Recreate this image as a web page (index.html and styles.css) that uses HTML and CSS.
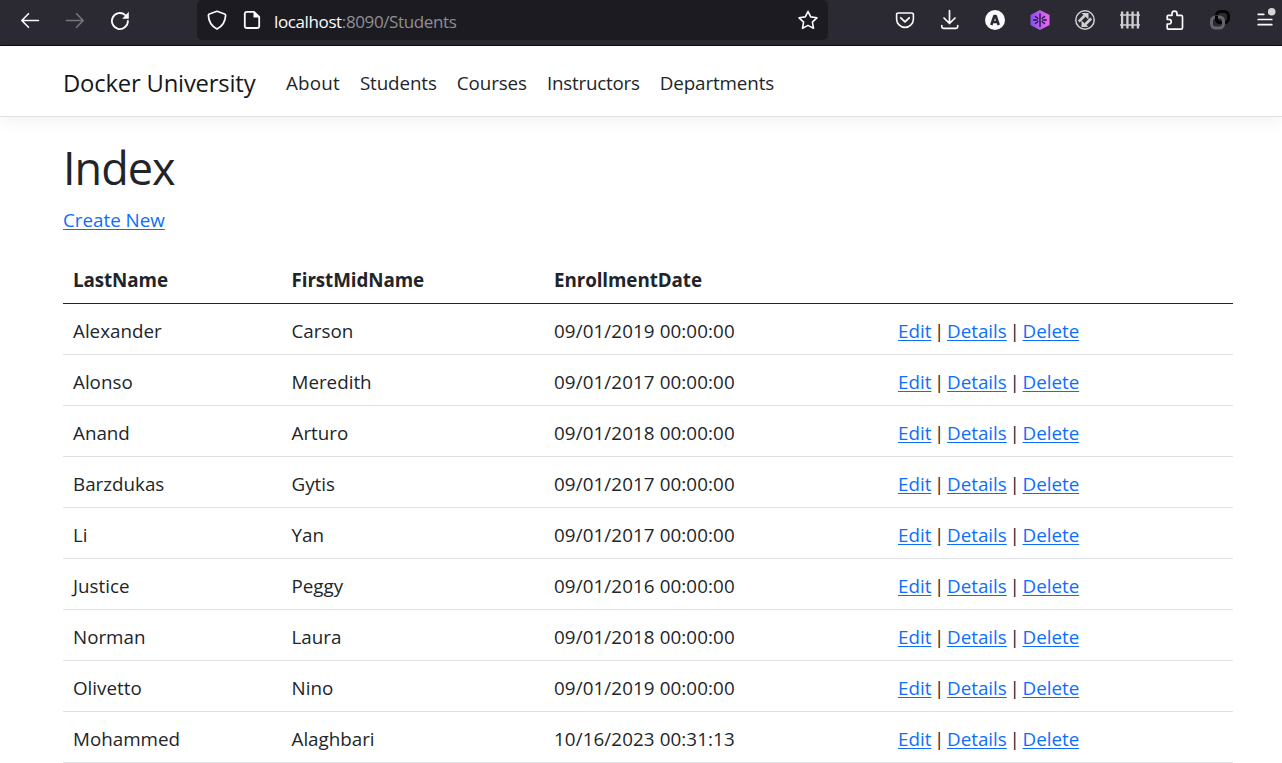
FILE: index.html
```html
<!DOCTYPE html>
<html lang="en">
<head>
<meta charset="utf-8">
<title>Index - Docker University</title>
<link rel="stylesheet" href="styles.css">
</head>
<body>
<div class="toolbar">
  <div class="history">
    <svg class="icon" viewBox="0 0 20 20"><path d="M18.5 10.5H2M8.5 3.7 1.8 10.5l6.7 6.8"/></svg>
    <svg class="icon dim" viewBox="0 0 20 20"><path d="M1.5 10.5H18M11.5 3.7l6.7 6.8-6.7 6.8"/></svg>
    <svg class="icon" viewBox="0 0 20 20"><path stroke-width="1.8" d="M17.9 11a8 8 0 1 1-2.6-5.9"/><path class="solid" d="M18.8 1.8v7h-6.6z"/></svg>
  </div>
  <div class="urlbar">
    <svg class="icon" viewBox="0 0 20 20"><path stroke-width="1.7" d="M10 1.3 17.6 4c.8.3 1 .8 1 1.4-.2 5.2-2.4 10.4-8.6 13.7C3.8 15.8 1.6 10.6 1.4 5.4c0-.6.2-1.1 1-1.4z"/></svg>
    <svg class="icon" viewBox="0 0 20 20"><path stroke-width="1.8" d="M12 1.8H4.8Q2.8 1.8 2.8 3.8V16Q2.8 18 4.8 18h10.4q2 0 2-2V7z"/><path class="solid" d="M11.5 1.5v6h6z"/></svg>
    <div class="address"><span class="host">localhost</span>:8090/Students</div>
    <svg class="icon" viewBox="0 0 20 20"><path stroke-width="1.6" d="m10 1.3 2.7 5.6 6.2.9-4.5 4.3 1.1 6.2L10 15.4l-5.5 2.9 1.1-6.2-4.5-4.3 6.2-.9z"/></svg>
  </div>
  <div class="extensions">
    <svg class="icon" viewBox="0 0 20 20"><path stroke-width="1.6" d="M3.3 3h13.4q1.7 0 1.7 1.7V9a8.4 8.4 0 0 1-16.8 0V4.7Q1.6 3 3.3 3z"/><path stroke-width="1.8" d="m5.8 7.8 4.2 4 4.2-4"/></svg>
    <svg class="icon" viewBox="0 0 20 20"><path stroke-width="1.7" d="M9.5.5v13M4 8l5.500 5.500L15 8M1.800 15.500v1.200q0 1.600 1.600 1.600h12.700q1.600 0 1.600-1.600v-1.200"/></svg>
    <svg class="icon" viewBox="0 0 20 20"><circle class="solid" cx="10" cy="10" r="10"/><path class="ink" d="m6.300 15 3.100-9h1.300l3 9M7.500 12h5"/></svg>
    <svg class="icon" viewBox="0 0 20 20">
      <defs><linearGradient id="violet"><stop offset="0" stop-color="#8651f5"/><stop offset="1" stop-color="#f067ee"/></linearGradient></defs>
      <path class="hexagon" d="M10 0 19.500 5v10L10 20 .5 15V5z"/>
      <path class="rune" d="M10 4v12.500M3.700 10h3.500M12.800 10h3.500M7.800 8.300 5.400 6.500M7.800 11.700 5.400 13.500M12.200 8.300l2.400-1.800M12.200 11.700l2.400 1.800"/>
    </svg>
    <svg class="icon grey" viewBox="0 0 20 20"><circle cx="10" cy="10" r="9.200" stroke-width="1.500"/><path stroke-width="2.600" stroke-linecap="butt" d="m3.800 11.500 6-6M10.200 14.500l6-6"/><path class="solid" d="M6.500 3h7v6.500zM6.500 10.500V17h7z"/></svg>
    <svg class="icon grey wide" viewBox="0 0 20 20"><path stroke-width="2.300" d="M2.100 1.500v17M7.400 1.500v17M12.600 1.500v17M17.900 1.500v17"/><path stroke-width="1.700" d="M0 5h20M0 15h20"/></svg>
    <svg class="icon" viewBox="0 0 20 20"><path stroke-width="1.700" d="M2.200 8V6.500Q2.200 5.300 3.400 5.300H7V3.700a2.500 2.500 0 0 1 5 0v1.600h4q1.500 0 1.500 1.500v11q0 1.400-1.500 1.400H3.500q-1.300 0-1.300-1.300V14h1.700a2.300 2.300 0 0 0 0-4.700H2.200z"/></svg>
    <svg class="icon" viewBox="0 0 20 20"><rect class="link-front" x="6.500" y="1.500" width="12" height="11" rx="4"/><rect class="link-back" x="1.500" y="7" width="12" height="11" rx="4"/><path class="link-front" d="M6.500 6v2.500q0 4 4 4"/></svg>
    <svg class="icon" viewBox="0 0 20 20"><path stroke-width="1.700" d="M3.200 4.300h5.600M3.200 9.500h13.600M3.200 14.700h13.600"/><circle class="badge" cx="16.700" cy="1.700" r="3.800"/></svg>
  </div>
</div>
<header class="navbar">
  <a class="brand">Docker University</a>
  <nav class="links"><a class="loose">About</a><a>Students</a><a>Courses</a><a class="snug">Instructors</a><a>Departments</a></nav>
</header>
<main class="content">
  <h1 class="title">Index</h1>
  <p class="create"><a class="action">Create New</a></p>
  <table class="table">
    <colgroup><col class="c-last"><col class="c-first"><col class="c-date"><col></colgroup>
    <thead><tr><th>LastName</th><th>FirstMidName</th><th>EnrollmentDate</th><th></th></tr></thead>
    <tbody>
      <tr><td>Alexander</td><td>Carson</td><td class="date">09/01/2019 00:00:00</td><td class="actions"><a class="action">Edit</a> | <a class="action">Details</a> | <a class="action">Delete</a></td></tr>
      <tr><td>Alonso</td><td>Meredith</td><td class="date">09/01/2017 00:00:00</td><td class="actions"><a class="action">Edit</a> | <a class="action">Details</a> | <a class="action">Delete</a></td></tr>
      <tr><td>Anand</td><td>Arturo</td><td class="date">09/01/2018 00:00:00</td><td class="actions"><a class="action">Edit</a> | <a class="action">Details</a> | <a class="action">Delete</a></td></tr>
      <tr><td>Barzdukas</td><td>Gytis</td><td class="date">09/01/2017 00:00:00</td><td class="actions"><a class="action">Edit</a> | <a class="action">Details</a> | <a class="action">Delete</a></td></tr>
      <tr><td>Li</td><td>Yan</td><td class="date">09/01/2017 00:00:00</td><td class="actions"><a class="action">Edit</a> | <a class="action">Details</a> | <a class="action">Delete</a></td></tr>
      <tr><td>Justice</td><td>Peggy</td><td class="date">09/01/2016 00:00:00</td><td class="actions"><a class="action">Edit</a> | <a class="action">Details</a> | <a class="action">Delete</a></td></tr>
      <tr><td>Norman</td><td>Laura</td><td class="date">09/01/2018 00:00:00</td><td class="actions"><a class="action">Edit</a> | <a class="action">Details</a> | <a class="action">Delete</a></td></tr>
      <tr><td>Olivetto</td><td>Nino</td><td class="date">09/01/2019 00:00:00</td><td class="actions"><a class="action">Edit</a> | <a class="action">Details</a> | <a class="action">Delete</a></td></tr>
      <tr><td>Mohammed</td><td>Alaghbari</td><td class="date">10/16/2023 00:31:13</td><td class="actions"><a class="action">Edit</a> | <a class="action">Details</a> | <a class="action">Delete</a></td></tr>
    </tbody>
  </table>
</main>
</body>
</html>
```

FILE: styles.css
```css
* { box-sizing: border-box; }
body {
  margin: 0;
  overflow: hidden;
  background: #fff;
  color: #212529;
  font-family: "Segoe UI", "Open Sans", "Noto Sans", sans-serif;
  font-size: 18.8px;
  line-height: 30px;
}

/* Browser toolbar */
.toolbar {
  display: flex;
  align-items: flex-start;
  height: 46px;
  padding-left: 20px;
  background: #2b2a33;
  border-bottom: 1px solid #0c0c0d;
}
.history, .extensions { display: flex; gap: 25px; padding-top: 10px; }
.icon {
  display: block;
  flex: none;
  width: 20px;
  height: 20px;
  overflow: visible;
  fill: none;
  stroke: #fbfbfe;
  stroke-width: 1.6;
  stroke-linecap: round;
  stroke-linejoin: round;
}
.dim { stroke: #77767e; }
.grey { stroke: #d0d0d2; }
.wide { stroke-linecap: butt; }
.solid { fill: #fbfbfe; stroke: none; }
.grey .solid { fill: #d0d0d2; }
.ink { stroke: #2b2a33; stroke-width: 2.6; stroke-linecap: butt; }
.hexagon { fill: url(#violet); stroke: none; }
.rune { stroke: #2a1748; stroke-width: 1.4; }
.link-back { stroke: #66656c; stroke-width: 3; }
.link-front { stroke: #050506; stroke-width: 3; stroke-linecap: butt; }
.badge { fill: #d5d5d7; stroke: none; }
.urlbar {
  display: flex;
  align-items: center;
  width: 631px;
  height: 40px;
  margin: 0 67px;
  padding: 0 10px;
  gap: 15px;
  background: #1c1b22;
  border-radius: 5px;
}
.address {
  flex: 1;
  margin-left: -3px;
  padding-top: 3px;
  color: #8f8f94;
  font-size: 17px;
  letter-spacing: -0.38px;
}
.host { color: #fbfbfe; }

/* Site navigation */
.navbar {
  display: flex;
  align-items: center;
  height: 71px;
  padding: 4px 63px 0;
  border-bottom: 1px solid #dee2e6;
  box-shadow: 0 5px 15px rgba(0, 0, 0, 0.05);
}
.brand { width: 223px; font-size: 23.8px; letter-spacing: -0.18px; color: #16181b; white-space: nowrap; }
.links { display: flex; gap: 20px; letter-spacing: -0.1px; }
.loose { letter-spacing: 0.2px; }
.snug { letter-spacing: -0.22px; }

/* Page content */
.content { width: 1170px; margin-left: 63px; }
.title {
  margin: 0;
  padding-top: 21px;
  font-size: 45px;
  font-weight: 400;
  line-height: 60px;
  letter-spacing: -1px;
}
.create { margin: 7px 0 18px; }
.action { color: #0d6efd; text-decoration: underline; text-decoration-thickness: 1px; text-underline-offset: 2px; }
.table { width: 100%; table-layout: fixed; border-collapse: separate; border-spacing: 0; }
.table th, .table td {
  height: 51px;
  padding: 12px 10px 8px;
  text-align: left;
  white-space: nowrap;
  border-bottom: 1px solid #dee2e6;
}
.table th { font-weight: 700; letter-spacing: -0.08px; border-bottom-color: #212529; }
.table .date { letter-spacing: 0.1px; }
.table .actions { word-spacing: -2.2px; }
.c-last { width: 218.5px; }
.c-first { width: 262.5px; }
.c-date { width: 344px; }
```
